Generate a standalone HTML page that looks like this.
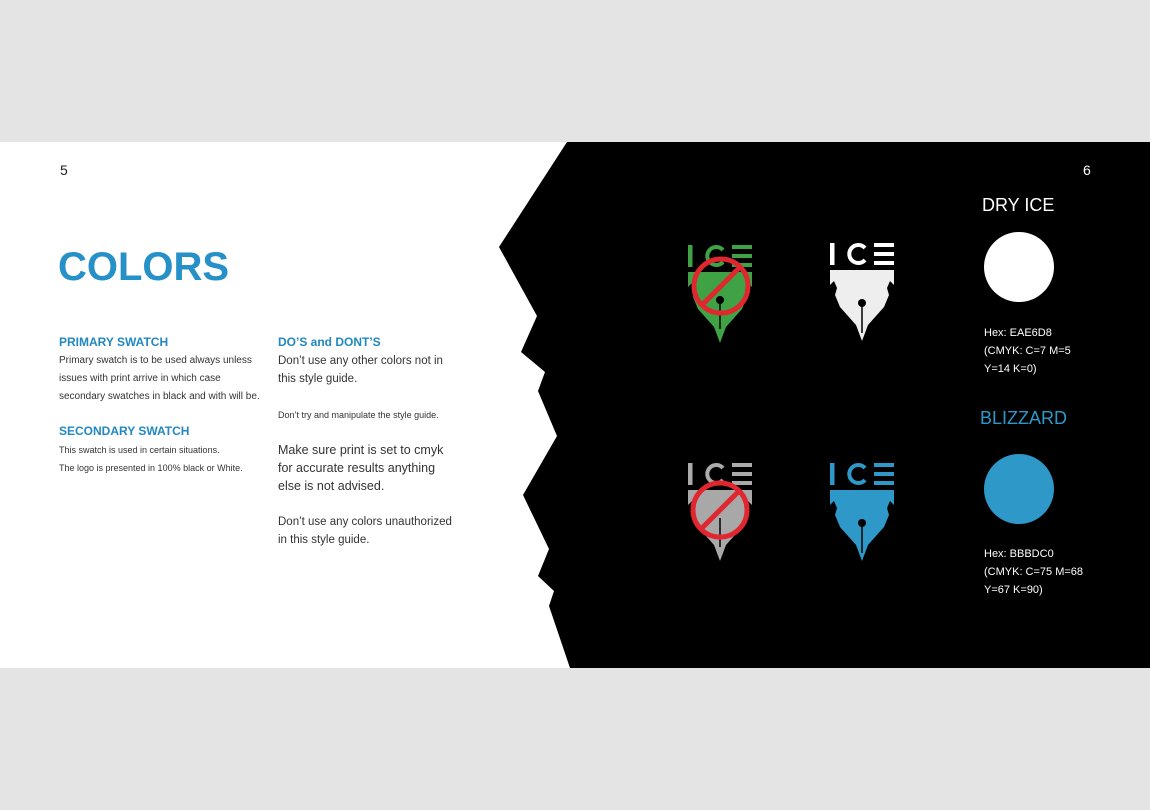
<!DOCTYPE html>
<html><head><meta charset="utf-8">
<style>
html,body{margin:0;padding:0;}
body{width:1150px;height:810px;background:#e4e4e4;position:relative;overflow:hidden;font-family:"Liberation Sans",sans-serif;}
.page{position:absolute;left:0;top:142px;width:1150px;height:526px;background:#fff;}
.t{position:absolute;white-space:nowrap;}
.blue{color:#2188c0;font-weight:bold;}
.body{color:#333;font-size:10px;line-height:18px;}
.small{color:#333;font-size:9px;line-height:18px;}
.w{color:#fff;}
</style></head><body>
<div class="page"></div>
<svg style="position:absolute;left:0;top:0" width="1150" height="810">
<defs></defs>
<polygon fill="#000" points="567,142 1150,142 1150,668 570,668 549,606 554,591 538,576 549,549 523,495 557,436 538,391 545,372 521,352 537,316 499,247"/>
<!-- green logo -->
<g transform="translate(688,245)">
 <rect x="0" y="0" width="4.5" height="22" fill="#3fa345"/>
 <path d="M35 5 A9 9 0 1 0 35 17" fill="none" stroke="#3fa345" stroke-width="4"/>
 <rect x="44" y="0" width="20" height="4" fill="#3fa345"/><rect x="44" y="9" width="20" height="4" fill="#3fa345"/><rect x="44" y="18" width="20" height="4" fill="#3fa345"/>
 <polygon fill="#3fa345" points="0,27 64,27 64,42 60,38 57,45 59,52 54,64 38,82 32,98 26,82 10,64 5,52 7,45 4,38 0,42"/>
 <circle cx="32" cy="55" r="4" fill="#000"/><line x1="32" y1="55" x2="32" y2="84" stroke="#000" stroke-width="1.5"/>
</g>
<!-- white logo -->
<g transform="translate(830,243)">
 <rect x="0" y="0" width="4.5" height="22" fill="#fff"/>
 <path d="M35 5 A9 9 0 1 0 35 17" fill="none" stroke="#fff" stroke-width="4"/>
 <rect x="44" y="0" width="20" height="4" fill="#fff"/><rect x="44" y="9" width="20" height="4" fill="#fff"/><rect x="44" y="18" width="20" height="4" fill="#fff"/>
 <polygon fill="#eee" points="0,27 64,27 64,42 60,38 57,45 59,52 54,64 38,82 32,98 26,82 10,64 5,52 7,45 4,38 0,42"/>
 <circle cx="32" cy="60" r="4" fill="#000"/><line x1="32" y1="60" x2="32" y2="90" stroke="#000" stroke-width="1.5"/>
</g>
<!-- grey logo -->
<g transform="translate(688,463)">
 <rect x="0" y="0" width="4.5" height="22" fill="#aaa"/>
 <path d="M35 5 A9 9 0 1 0 35 17" fill="none" stroke="#aaa" stroke-width="4"/>
 <rect x="44" y="0" width="20" height="4" fill="#aaa"/><rect x="44" y="9" width="20" height="4" fill="#aaa"/><rect x="44" y="18" width="20" height="4" fill="#aaa"/>
 <polygon fill="#a8a8a8" points="0,27 64,27 64,42 60,38 57,45 59,52 54,64 38,82 32,98 26,82 10,64 5,52 7,45 4,38 0,42"/>
 <line x1="32" y1="55" x2="32" y2="84" stroke="#000" stroke-width="1.5"/>
</g>
<!-- blue logo -->
<g transform="translate(830,463)">
 <rect x="0" y="0" width="4.5" height="22" fill="#2e98c9"/>
 <path d="M35 5 A9 9 0 1 0 35 17" fill="none" stroke="#2e98c9" stroke-width="4"/>
 <rect x="44" y="0" width="20" height="4" fill="#2e98c9"/><rect x="44" y="9" width="20" height="4" fill="#2e98c9"/><rect x="44" y="18" width="20" height="4" fill="#2e98c9"/>
 <polygon fill="#2e98c9" points="0,27 64,27 64,42 60,38 57,45 59,52 54,64 38,82 32,98 26,82 10,64 5,52 7,45 4,38 0,42"/>
 <circle cx="32" cy="60" r="4" fill="#000"/><line x1="32" y1="60" x2="32" y2="90" stroke="#000" stroke-width="1.5"/>
</g>
<!-- prohibition -->
<g fill="none" stroke="#e0262e" stroke-width="5">
 <circle cx="721" cy="286" r="27"/><line x1="702" y1="305" x2="740" y2="267"/>
 <circle cx="720" cy="510" r="27"/><line x1="701" y1="529" x2="739" y2="491"/>
</g>
<circle cx="1019" cy="267" r="35" fill="#fff"/>
<circle cx="1019" cy="489" r="35" fill="#2e98c9"/>
</svg>
<div class="t" style="left:60px;top:162px;font-size:14px;color:#222;">5</div>
<div class="t" style="left:1083px;top:162px;font-size:14px;color:#fff;">6</div>
<div class="t blue" style="left:58px;top:245px;font-size:40px;color:#2690c8;">COLORS</div>
<div class="t blue" style="left:59px;top:335px;font-size:12px;">PRIMARY SWATCH</div>
<div class="t body" style="left:59px;top:352px;">Primary swatch is to be used always unless<br>issues with print arrive in which case<br>secondary swatches in black and with will be.</div>
<div class="t blue" style="left:59px;top:424px;font-size:12px;">SECONDARY SWATCH</div>
<div class="t small" style="left:59px;top:441px;">This swatch is used in certain situations.<br>The logo is presented in 100% black or White.</div>
<div class="t blue" style="left:278px;top:335px;font-size:12px;">DO’S and DONT’S</div>
<div class="t body" style="left:278px;top:352px;font-size:11.5px;">Don’t use any other colors not in<br>this style guide.</div>
<div class="t small" style="left:278px;top:406px;">Don’t try and manipulate the style guide.</div>
<div class="t body" style="left:278px;top:441px;font-size:12.5px;">Make sure print is set to cmyk<br>for accurate results anything<br>else is not advised.</div>
<div class="t body" style="left:278px;top:513px;font-size:11.5px;">Don’t use any colors unauthorized<br>in this style guide.</div>
<div class="t w" style="left:982px;top:195px;font-size:18px;">DRY ICE</div>
<div class="t w" style="left:984px;top:324px;font-size:11px;line-height:18px;">Hex: EAE6D8<br>(CMYK: C=7 M=5<br>Y=14 K=0)</div>
<div class="t" style="left:980px;top:408px;font-size:18px;color:#2e98c9;">BLIZZARD</div>
<div class="t w" style="left:984px;top:545px;font-size:11px;line-height:18px;">Hex: BBBDC0<br>(CMYK: C=75 M=68<br>Y=67 K=90)</div>
</body></html>
